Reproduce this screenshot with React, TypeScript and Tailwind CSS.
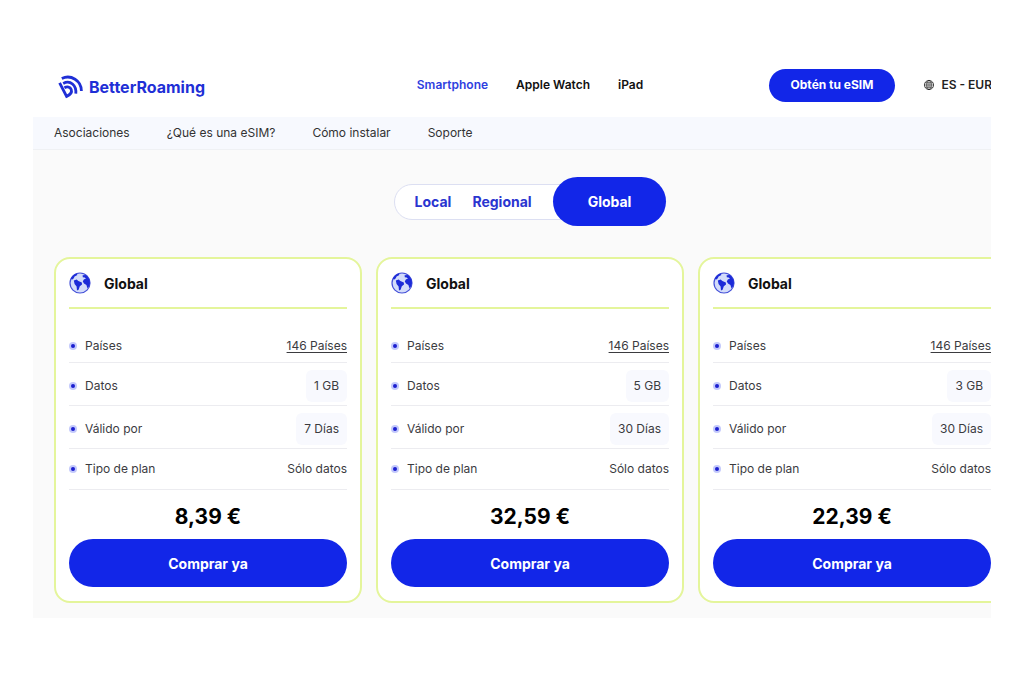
import React from 'react';

const plans = [
  { data: '1 GB', days: '7 Días', price: '8,39 €' },
  { data: '5 GB', days: '30 Días', price: '32,59 €' },
  { data: '3 GB', days: '30 Días', price: '22,39 €' },
];

function Logo() {
  return (
    <a href="#" className="flex items-center gap-1 pt-[3px] text-[#1f2fd6] text-[16px] font-bold">
      <svg className="h-6 w-[27px]" viewBox="0 0 27 24" fill="none" stroke="currentColor" strokeWidth="2.8" aria-hidden="true">
        <path d="M3.8 3.4C13 -0.8 23.4 5.6 23.4 16" />
        <path d="M5.2 8.4C12.4 4.6 18.6 10.4 17.8 18.6" />
        <path d="M1.6 7.8L8.6 21.4C12.6 19.6 14.2 17.2 13.2 14.4C12.2 11.8 9.2 11.2 6.4 12.8" />
      </svg>
      BetterRoaming
    </a>
  );
}

function GlobeIcon() {
  return (
    <svg className="h-3 w-3" viewBox="0 0 12 12" fill="none" stroke="currentColor" strokeWidth="0.8" aria-hidden="true">
      <circle cx="6" cy="6" r="4.6" />
      <ellipse cx="6" cy="6" rx="2.2" ry="4.6" />
      <path d="M6 1.4v9.2M1.4 6h9.2M2.2 3.8h7.6M2.2 8.2h7.6" strokeWidth="0.6" />
    </svg>
  );
}

function Earth() {
  return (
    <svg className="h-[22px] w-[22px]" viewBox="0 0 22 22" aria-hidden="true">
      <circle cx="11" cy="11" r="10" fill="#d3dcfa" stroke="#4450d8" strokeWidth="1.2" />
      <path
        fill="#1c2bd8"
        d="M1.8 6.6C3 4.2 5.2 2.2 7.8 1.4L8.4 3L5.6 4.4L4.6 6.6L3 7.8Z"
      />
      <path
        fill="#1c2bd8"
        d="M4.8 8.4L7.6 7.4L9.4 9L12.8 10.4L13 12.4L10.8 14.2L9.6 17.8L8 18.6L7.6 14.6L5.6 12Z"
      />
      <path
        fill="#1c2bd8"
        d="M13.6 3.2L16.6 3C19.4 4.8 21 7.8 21 11.2L20 14.6L18.4 16.2L17.4 13L15 11.4L13.8 9.4L14.8 7.4L17 6.6L15.6 5.4L13.8 5.2Z"
      />
    </svg>
  );
}

function Row({ label, className, children }: { label: string; className: string; children: React.ReactNode }) {
  return (
    <div className={`flex items-center justify-between border-b border-[#ececf0] ${className}`}>
      <dt className="flex items-center gap-2">
        <span className="flex h-2 w-2 items-center justify-center rounded-full bg-[#c3c9fb]">
          <span className="h-1 w-1 rounded-full bg-[#1c1fd0]" />
        </span>
        {label}
      </dt>
      <dd>{children}</dd>
    </div>
  );
}

function Chip({ children }: { children: React.ReactNode }) {
  return <span className="flex h-8 items-center rounded-md bg-[#f8f9fe] px-2">{children}</span>;
}

function PlanCard({ plan }: { plan: (typeof plans)[number] }) {
  return (
    <article className="rounded-2xl border-2 border-[#e4f59b] bg-white px-[13px] pb-[14px]">
      <h2 className="flex h-[50px] items-center gap-[13px] border-b-2 border-[#e4f59b] text-[14px] font-bold text-[#111]">
        <Earth />
        Global
      </h2>
      <dl className="pt-5 text-[12px] text-[#3b3b3f]">
        <Row label="Países" className="h-[34px]">
          <a href="#" className="underline underline-offset-2">146 Países</a>
        </Row>
        <Row label="Datos" className="h-[43px] pt-1">
          <Chip>{plan.data}</Chip>
        </Row>
        <Row label="Válido por" className="h-[43px] pt-1">
          <Chip>{plan.days}</Chip>
        </Row>
        <Row label="Tipo de plan" className="h-[41px]">Sólo datos</Row>
      </dl>
      <p className="flex h-[49px] items-center justify-center pt-1 text-[21px] font-bold text-black">{plan.price}</p>
      <button type="button" className="h-12 w-full rounded-full bg-[#1226e8] text-[14px] font-bold text-white">
        Comprar ya
      </button>
    </article>
  );
}

export default function App() {
  return (
    <div className="min-h-screen bg-white px-[33px] pt-[53px] font-['Inter',sans-serif]">
      <div className="overflow-hidden">
        {/* content runs past the right edge of the frame */}
        <div className="-mr-9">
          <header className="grid h-16 grid-cols-[1fr_auto_1fr] items-center bg-white px-[25px]">
            <Logo />
            <nav className="flex gap-7 text-[12px] font-semibold text-[#111]">
              <a href="#" className="text-[#2f3fe0]">Smartphone</a>
              <a href="#">Apple Watch</a>
              <a href="#">iPad</a>
            </nav>
            <div className="flex items-center justify-end gap-7 pr-[10px]">
              <button type="button" className="h-[33px] rounded-full bg-[#1226e8] px-[22px] text-[12px] font-bold text-white">
                Obtén tu eSIM
              </button>
              <button type="button" className="flex items-center gap-[6px] text-[12px] font-semibold text-[#222]">
                <GlobeIcon />
                ES - EUR
              </button>
            </div>
          </header>

          <nav className="flex h-[33px] items-center gap-[37px] border-b border-[#eff1f4] bg-[#f7f9fe] px-[21px] text-[12px] text-[#333]">
            <a href="#">Asociaciones</a>
            <a href="#">¿Qué es una eSIM?</a>
            <a href="#">Cómo instalar</a>
            <a href="#">Soporte</a>
          </nav>

          <main className="bg-[#fafafa] px-[21px] pt-[27px] pb-[15px]">
            <div className="flex items-center justify-center text-[14px] font-bold text-[#2a35d0]">
              <div className="-mr-9 flex h-9 items-center gap-[21px] rounded-full border border-[#dcdff2] bg-white pr-14 pl-5">
                <button type="button">Local</button>
                <button type="button">Regional</button>
              </div>
              <button type="button" className="relative h-[49px] rounded-full bg-[#1226e8] px-[35px] text-white">
                Global
              </button>
            </div>

            <section className="mt-[31px] grid grid-cols-3 gap-[14px]">
              {plans.map((plan) => (
                <PlanCard key={plan.price} plan={plan} />
              ))}
            </section>
          </main>
        </div>
      </div>
    </div>
  );
}
